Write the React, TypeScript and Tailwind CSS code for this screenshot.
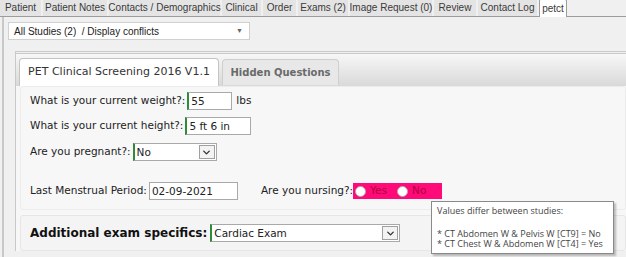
import { ChevronDown } from "lucide-react";

const topTabs = [
  { label: "Patient", w: "w-[41px]" },
  { label: "Patient Notes", w: "w-[64px]" },
  { label: "Contacts / Demographics", w: "w-[111px]" },
  { label: "Clinical", w: "w-[39px]" },
  { label: "Order", w: "w-[33px]" },
  { label: "Exams (2)", w: "w-[50px]" },
  { label: "Image Request (0)", w: "w-[82px]" },
  { label: "Review", w: "w-[42px]" },
  { label: "Contact Log", w: "w-[59px]" },
];

const SelectBox = ({ value, width }: { value: string; width: string }) => (
  <div
    className={`flex h-[18px] items-center border border-[#a9a9a9] border-l-2 border-l-[#2e8b3a] bg-white ${width}`}
  >
    <span className="flex-1 whitespace-nowrap pl-[2px] leading-none">{value}</span>
    <span className="mr-[1px] flex h-[14px] w-[16px] items-center justify-center border border-[#a0a0a0] bg-[#f3f3f3]">
      <ChevronDown size={11} strokeWidth={3} className="text-[#333]" />
    </span>
  </div>
);

const TextBox = ({ value, width, green }: { value: string; width: string; green?: boolean }) => (
  <div
    className={`flex h-[18px] items-center whitespace-nowrap border border-[#a9a9a9] bg-white pl-[2px] leading-none ${width} ${
      green ? "border-l-2 border-l-[#2e8b3a]" : ""
    }`}
  >
    {value}
  </div>
);

export default function App() {
  return (
    <div className="h-[257px] w-[626px] overflow-hidden bg-[#f0f0f0] font-['Liberation_Sans',Arial,sans-serif] text-[#222]">
      {/* top tabs */}
      <div className="flex h-[17px] items-end gap-[2px] border-b border-[#9c9c9c] bg-[#f0f0f0] text-[10px] text-[#3a3a3a]">
        {topTabs.map((t) => (
          <div
            key={t.label}
            className={`flex h-[16px] shrink-0 items-center justify-center whitespace-nowrap bg-[#e4e4e4] leading-none ${t.w}`}
          >
            {t.label}
          </div>
        ))}
        <div className="-mb-px flex h-[18px] w-[28px] shrink-0 items-center justify-center rounded-t-[2px] border border-b-0 border-[#9c9c9c] bg-white leading-none">
          petct
        </div>
      </div>

      <div className="ml-[2px] h-full border-l-2 border-[#c8c8c8] pt-[5px]">
        {/* study selector */}
        <div className="ml-[4px] flex h-[18px] w-[242px] items-center justify-between border border-[#d0d0d0] bg-white pl-[5px] pr-[6px] text-[10px] text-[#222]">
          <span>All Studies (2)&nbsp; / Display conflicts</span>
          <span className="text-[7px] text-[#666]">▼</span>
        </div>

        {/* panel */}
        <div className="ml-[11px] mt-[11px] border-l border-t-[3px] border-double border-[#c9c9c9] font-['DejaVu_Sans',Verdana,sans-serif] text-[10.5px]">
          <div className="flex h-[32px] items-end bg-gradient-to-b from-[#f7f7f7] to-[#d9d9d9] pl-[3px]">
            <div className="flex h-[28px] w-[200px] items-center justify-center whitespace-nowrap rounded-t-[4px] border border-b-0 border-[#c4c4c4] bg-white text-[11px] text-[#333]">
              PET Clinical Screening 2016 V1.1
            </div>
            <div className="mb-[1px] ml-[3px] flex h-[26px] w-[117px] items-center justify-center whitespace-nowrap rounded-t-[4px] border border-b-0 border-[#cfcfcf] bg-[#e8e8e8] text-[10px] font-bold text-[#6a6a6a]">
              Hidden Questions
            </div>
          </div>

          <div className="bg-[#f7f7f7] pl-[4px]">
            <div className="rounded-[3px] border border-[#ececec] pb-[6px] pl-[9px] pt-[2px]">
              <div className="flex h-[24px] items-center gap-[2px]">
                <span>What is your current weight?:</span>
                <TextBox value="55" width="w-[45px]" green />
                <span className="ml-[2px]">lbs</span>
              </div>
              <div className="flex h-[26px] items-center gap-[2px]">
                <span>What is your current height?:</span>
                <TextBox value="5 ft 6 in" width="w-[66px]" green />
              </div>
              <div className="flex h-[26px] items-center gap-[2px]">
                <span>Are you pregnant?:</span>
                <SelectBox value="No" width="w-[84px]" />
              </div>
              <div className="mt-[14px] flex h-[24px] items-center">
                <span>Last Menstrual Period:</span>
                <div className="ml-[2px]">
                  <TextBox value="02-09-2021" width="w-[89px]" />
                </div>
                <span className="ml-[23px]">Are you nursing?:</span>
                <div className="relative">
                  <div className="flex h-[16px] w-[89px] items-center gap-[4px] bg-[#ff0a78] pl-[2px] text-[#b0003f]">
                    <span className="h-[11px] w-[11px] rounded-full border border-[#aaa] bg-white" />
                    <span className="mr-[6px]">Yes</span>
                    <span className="h-[11px] w-[11px] rounded-full border border-[#aaa] bg-white" />
                    <span>No</span>
                  </div>
                  <div className="absolute left-[78px] top-[18px] z-10 w-[183px] border border-[#8a8a8a] bg-white px-[5px] py-[4px] font-['Open_Sans',sans-serif] text-[9px] leading-[10px] text-[#444] shadow-[2px_2px_2px_rgba(0,0,0,0.25)]">
                    <div>Values differ between studies:</div>
                    <div className="h-[13px]" />
                    <div className="whitespace-nowrap">* CT Abdomen W &amp; Pelvis W [CT9] = No</div>
                    <div className="whitespace-nowrap">* CT Chest W &amp; Abdomen W [CT4] = Yes</div>
                  </div>
                </div>
              </div>
            </div>

            <div className="mt-[5px] flex h-[36px] items-center rounded-[3px] border border-[#e6e6e6] bg-[#f4f4f4] pl-[9px]">
              <span className="mr-[3px] whitespace-nowrap text-[12px] font-bold text-[#111]">Additional exam specifics:</span>
              <SelectBox value="Cardiac Exam" width="w-[190px]" />
            </div>
          </div>
        </div>
      </div>
    </div>
  );
}
